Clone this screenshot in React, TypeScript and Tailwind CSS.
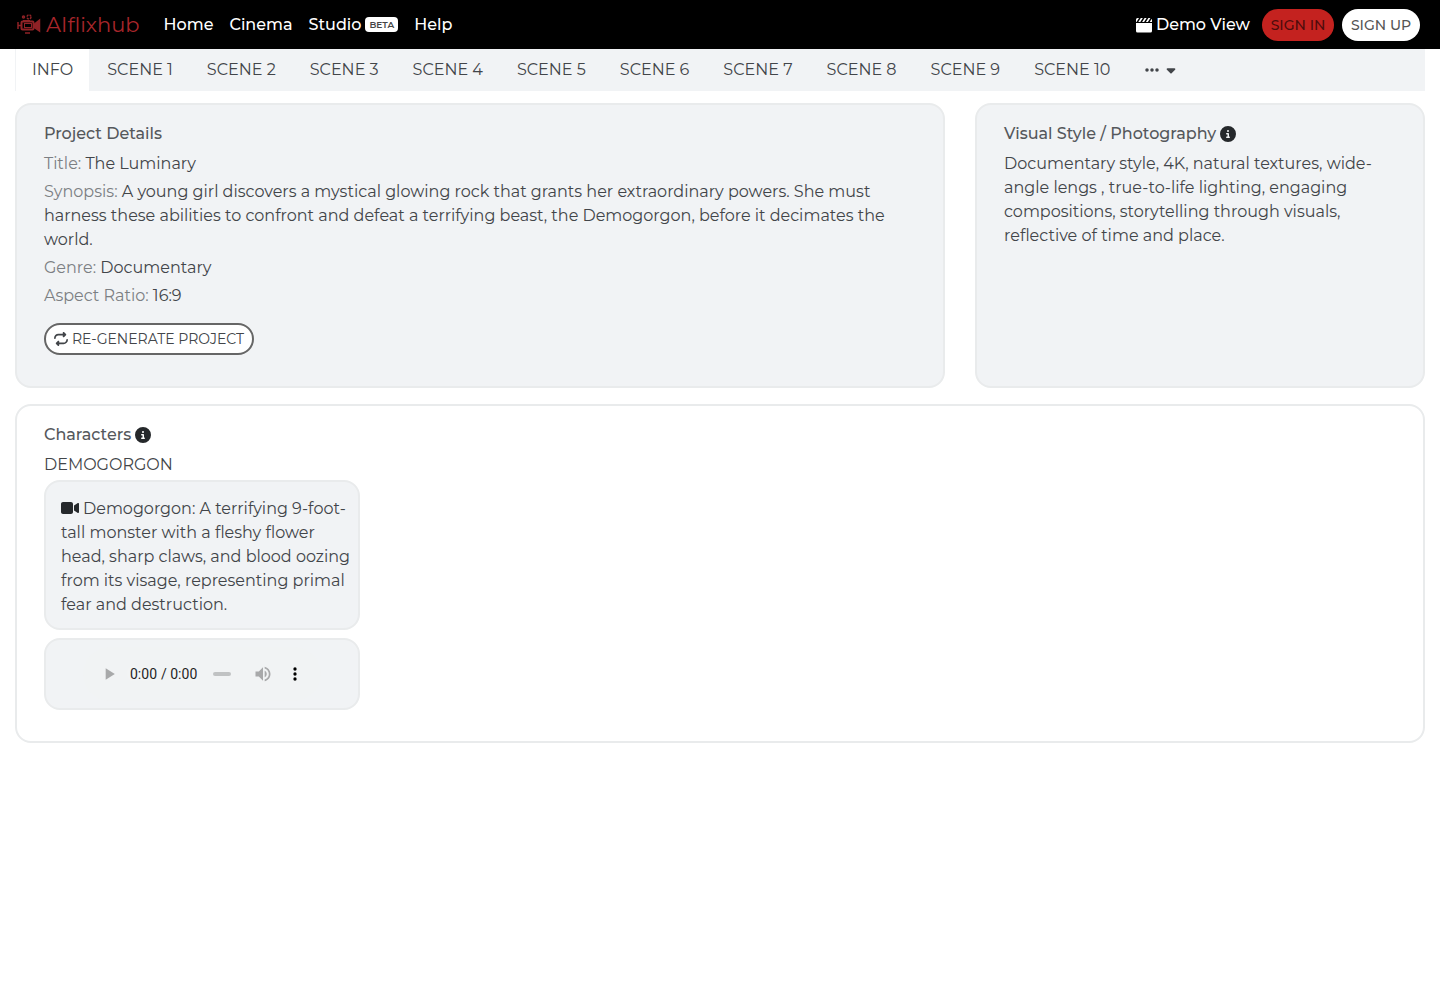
import { FaCaretDown, FaCircleInfo, FaEllipsis, FaRepeat, FaVideo } from "react-icons/fa6";

const scenes = Array.from({ length: 10 }, (_, i) => `SCENE ${i + 1}`);

function Logo() {
  return (
    <svg viewBox="0 0 26 24" className="h-6 w-[26px]" fill="none" stroke="#8f2226" strokeWidth="1.5" aria-hidden="true">
      <circle cx="7.5" cy="4" r="1" />
      <circle cx="13" cy="4" r="2" strokeDasharray="2 1" />
      <path d="M7 7.500h7" strokeWidth="1" />
      <rect x="5.5" y="8.500" width="12" height="8" rx="1" strokeWidth="2" />
      <rect x="8.5" y="10.500" width="7" height="4" strokeWidth="1" />
      <path d="M2 9v7M2 12.500h3M9 20h5" />
      <path d="M18.500 11l5-4v11l-5-3.500z" fill="#8f2226" />
    </svg>
  );
}

function Clapper() {
  return (
    <svg viewBox="0 0 16 16" className="h-4 w-4 shrink-0" fill="currentColor" aria-hidden="true">
      <path d="M0 6h16v8a1.500 1.500 0 0 1-1.500 1.500h-13A1.500 1.500 0 0 1 0 14z" />
      <path d="M1.500 1H3L.5 5H0V2.500A1.500 1.500 0 0 1 1.500 1zM4.800 1h2L4.300 5h-2zM8.600 1h2L8.100 5h-2zM12.400 1h2l-2.500 4h-2zM15.600 2l.4.500V5h-2.300z" />
    </svg>
  );
}

const card = "rounded-2xl border-2 border-[#e9ebec]";
const heading = "flex items-center gap-1 font-medium leading-6 text-[#55585c]";

export default function App() {
  return (
    <div className="min-h-screen bg-white font-['Montserrat','Inter',sans-serif] text-base text-[#424549]">
      <header className="flex h-[49px] items-center bg-black px-4 pr-5 font-medium text-white">
        <a href="#" className="flex items-center gap-1 text-[21px] font-normal text-[#a8262b]">
          <Logo />
          AIflixhub
        </a>
        <nav className="ml-6 flex items-center gap-4">
          <a href="#">Home</a>
          <a href="#">Cinema</a>
          <a href="#" className="flex items-center gap-1">
            Studio
            <span className="rounded-sm bg-white px-1 text-[9px] font-semibold leading-[15px] text-[#444]">BETA</span>
          </a>
          <a href="#">Help</a>
        </nav>
        <div className="ml-auto flex items-center gap-2">
          <a href="#" className="mr-1 flex items-center gap-1">
            <Clapper />
            Demo View
          </a>
          <button className="h-8 w-[72px] rounded-full bg-[#c4221f] text-sm font-medium text-[#4d0c0c]">SIGN IN</button>
          <button className="h-8 w-[78px] rounded-full bg-white text-sm font-medium text-[#555]">SIGN UP</button>
        </div>
      </header>

      <main className="px-[15px]">
        <div role="tablist" className="flex h-[42px] items-stretch bg-[#f1f3f5]">
          <button role="tab" aria-selected="true" className="border-x border-[#f1f3f5] bg-white px-4">INFO</button>
          {scenes.map((s) => (
            <button key={s} role="tab" aria-selected="false" className="border-x border-transparent px-4">{s}</button>
          ))}
          <button aria-label="More scenes" className="flex items-center gap-1 border-x border-transparent px-4">
            <FaEllipsis className="size-4" />
            <FaCaretDown className="size-3.5" />
          </button>
        </div>

        <div className="mt-3 grid grid-cols-[minmax(0,31fr)_minmax(0,15fr)] gap-[30px]">
          <section className={`${card} bg-[#f1f3f5] px-[27px] pt-[17px] pb-[31px]`}>
            <h2 className={heading}>Project Details</h2>
            <div className="mt-1.5 space-y-1">
              <p><span className="text-[#7c7f83]">Title:</span> The Luminary</p>
              <p>
                <span className="text-[#7c7f83]">Synopsis:</span> A young girl discovers a mystical glowing rock that grants her extraordinary powers. She must harness these abilities to confront and defeat a terrifying beast, the Demogorgon, before it decimates the world.
              </p>
              <p><span className="text-[#7c7f83]">Genre:</span> Documentary</p>
              <p><span className="text-[#7c7f83]">Aspect Ratio:</span> 16:9</p>
            </div>
            <button className="mt-[15px] flex h-8 items-center gap-1 rounded-full border-2 border-[#666] bg-white px-2 text-sm">
              <FaRepeat className="size-3.5" />
              RE-GENERATE PROJECT
            </button>
          </section>
          <section className={`${card} bg-[#f1f3f5] px-[27px] pt-[17px]`}>
            <h2 className={heading}>
              Visual Style / Photography <FaCircleInfo className="size-4 text-[#25282b]" />
            </h2>
            <p className="mt-1.5">
              Documentary style, 4K, natural textures, wide-angle lengs , true-to-life lighting, engaging compositions, storytelling through visuals, reflective of time and place.
            </p>
          </section>
        </div>

        <section className={`${card} mt-4 px-[27px] pt-[17px] pb-[31px]`}>
          <h2 className={heading}>
            Characters <FaCircleInfo className="size-4 text-[#25282b]" />
          </h2>
          <h3 className="mt-1.5">DEMOGORGON</h3>
          <div className="mt-[3px] w-[316px]">
            <div className={`${card} bg-[#f1f3f5] pt-[15px] pb-[11px] pl-[15px]`}>
              <p>
                <FaVideo className="mr-1 inline size-[18px] align-[-3px] text-[#25282b]" />
                Demogorgon: A terrifying 9-foot-tall monster with a fleshy flower head, sharp claws, and blood oozing from its visage, representing primal fear and destruction.
              </p>
            </div>
            <div className={`${card} mt-2 flex h-[72px] items-center justify-center bg-[#f1f3f5]`}>
              <audio controls className="h-[54px] w-[238px]" />
            </div>
          </div>
        </section>
      </main>
    </div>
  );
}
